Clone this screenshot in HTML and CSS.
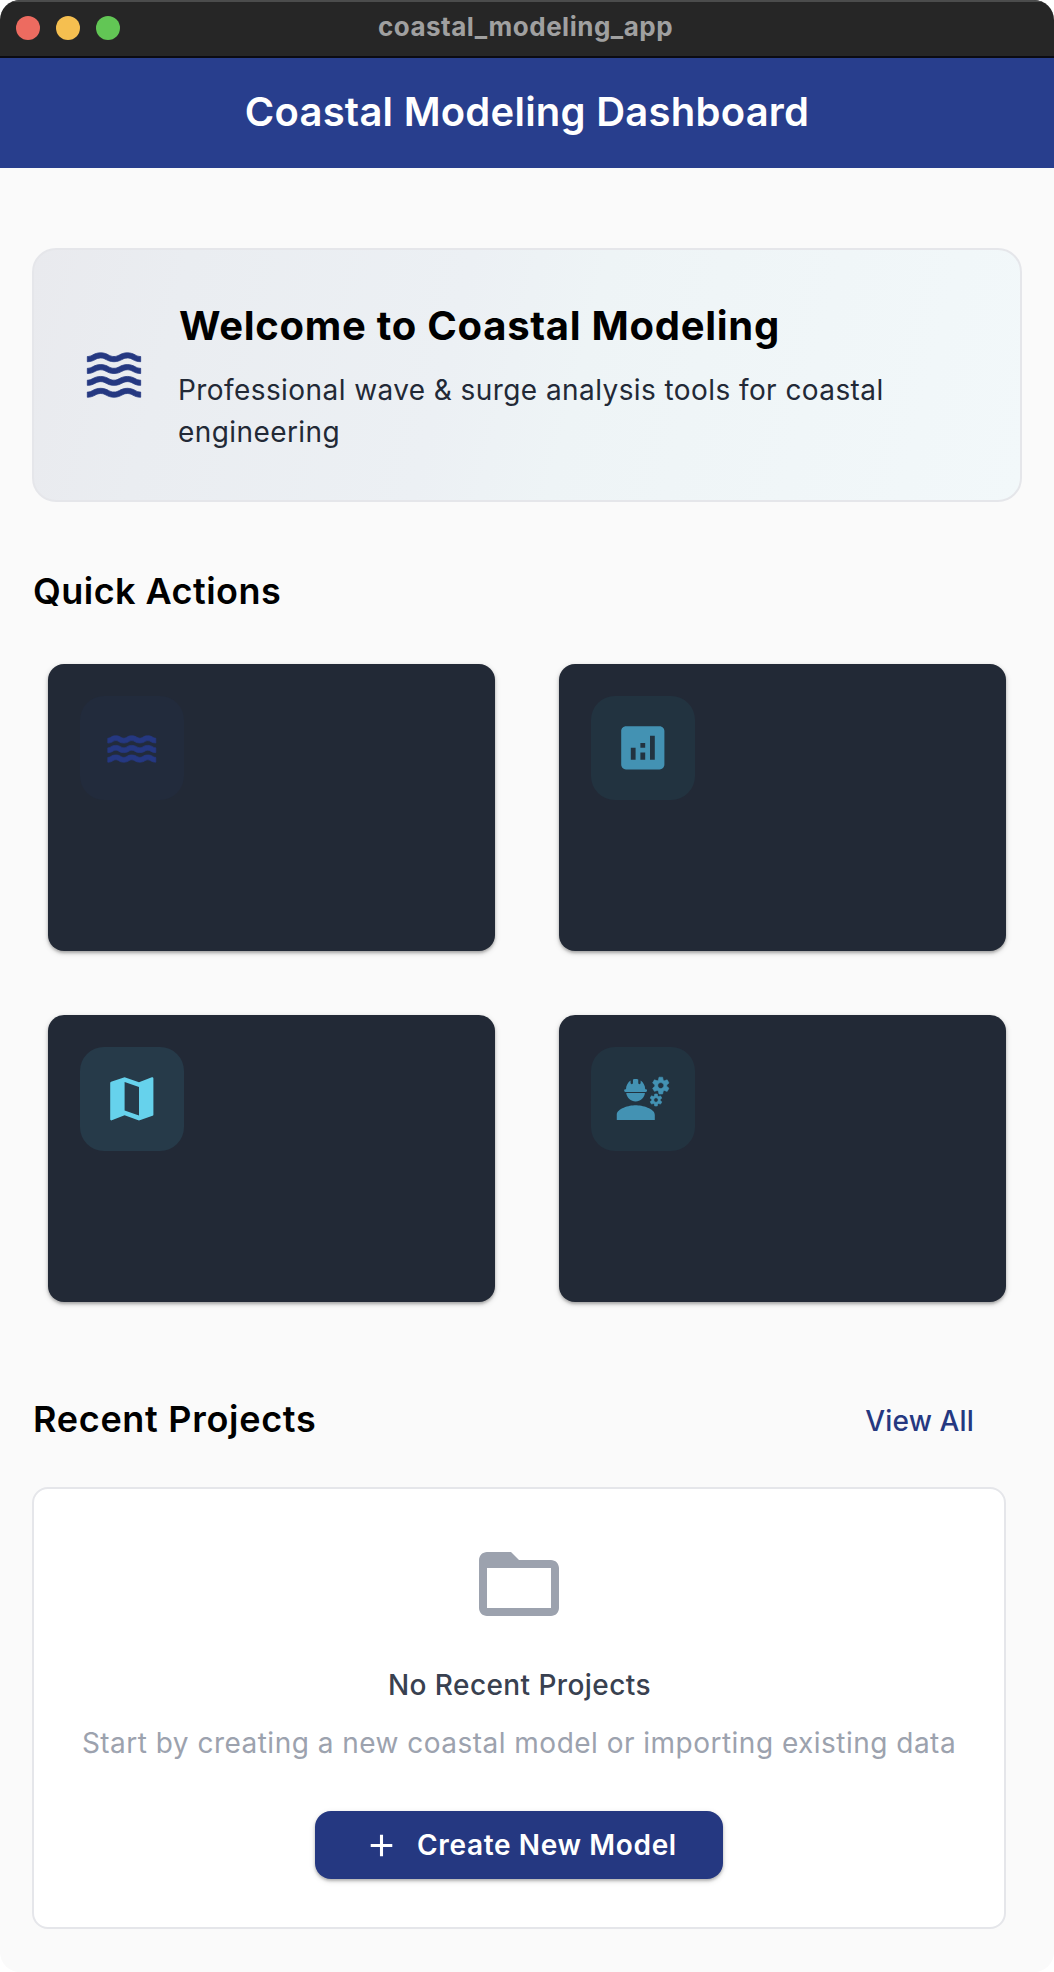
FILE: index.html
```
<!DOCTYPE html>
<html lang="en">
<head>
<meta charset="utf-8">
<title>coastal_modeling_app</title>
<link rel="stylesheet" href="styles.css">
</head>
<body>
<div class="window">
  <div class="titlebar">
    <div class="lights">
      <span class="light light-close"></span>
      <span class="light light-min"></span>
      <span class="light light-max"></span>
    </div>
    <span class="window-title">coastal_modeling_app</span>
  </div>
  <header class="appbar"><h1>Coastal Modeling Dashboard</h1></header>
  <main class="content">
    <section class="welcome">
      <svg class="welcome-icon" viewBox="0 0 24 24"><path id="wave" d="M17 16.99c-1.35 0-2.2.42-2.95.8-.65.33-1.18.6-2.05.6-.9 0-1.4-.25-2.05-.6-.75-.38-1.57-.8-2.95-.8s-2.2.42-2.95.8c-.65.33-1.17.6-2.05.6v1.95c1.35 0 2.2-.42 2.95-.8.65-.33 1.17-.6 2.05-.6s1.4.25 2.05.6c.75.38 1.57.8 2.95.8s2.2-.42 2.95-.8c.65-.33 1.18-.6 2.05-.6.9 0 1.4.25 2.05.6.75.38 1.58.8 2.95.8v-1.95c-.9 0-1.4-.25-2.05-.6-.75-.38-1.6-.8-2.95-.8z"/><use href="#wave" y="-4.45"/><use href="#wave" y="-8.9"/><use href="#wave" y="-13.32"/></svg>
      <div class="welcome-text">
        <h2>Welcome to Coastal Modeling</h2>
        <p>Professional wave &amp; surge analysis tools for coastal engineering</p>
      </div>
    </section>

    <h3 class="section-title quick-title">Quick Actions</h3>
    <section class="actions">
      <div class="action action-navy">
        <div class="tile"><svg viewBox="0 0 24 24"><path id="ripple" d="M18.67 15c-1.95 0-2.09 1-3.33 1-1.19 0-1.42-1-3.33-1-1.95 0-2.1 1-3.34 1-1.24 0-1.38-1-3.33-1C3.39 15 3.24 16 2 16v2c1.95 0 2.11-1 3.34-1 1.24 0 1.38 1 3.33 1 1.95 0 2.1-1 3.34-1 1.19 0 1.42 1 3.33 1 1.94 0 2.09-1 3.33-1 1.19 0 1.42 1 3.33 1v-2c-1.24 0-1.38-1-3.33-1z"/><use href="#ripple" y="-4"/><use href="#ripple" y="-8"/></svg></div>
      </div>
      <div class="action action-teal">
        <div class="tile"><svg viewBox="0 0 24 24"><path d="M19 3H5c-1.1 0-2 .9-2 2v14c0 1.1.9 2 2 2h14c1.1 0 2-.9 2-2V5c0-1.1-.9-2-2-2zM9 17H7v-5h2v5zm4 0h-2v-3h2v3zm0-5h-2v-2h2v2zm4 5h-2V7h2v10z"/></svg></div>
      </div>
      <div class="action action-cyan">
        <div class="tile"><svg viewBox="0 0 24 24"><path d="M20.5 3l-.16.03L15 5.1 9 3 3.36 4.9c-.21.07-.36.25-.36.48V20.5c0 .28.22.5.5.5l.16-.03L9 18.9l6 2.1 5.64-1.9c.21-.07.36-.25.36-.48V3.5c0-.28-.22-.5-.5-.5zM15 19l-6-2.11V5l6 2.11V19z"/></svg></div>
      </div>
      <div class="action action-teal">
        <div class="tile"><svg viewBox="0 0 24 24"><path d="M9 14.7c-2.67 0-7.85 1.34-7.85 4v2.1H17v-2.1c0-2.66-5.33-4-8-4z"/><path d="M4.74 9.15h8.52c.27 0 .49-.22.49-.49v-.17c0-.27-.22-.49-.49-.49H13c0-1.48-.81-2.85-1.9-3.6v.9c0 .28-.22.6-.5.6s-.5-.22-.5-.5V3.95C9.68 3.86 9.35 3.8 9 3.8s-.68.06-1.1.15V5.4c0 .28-.22.5-.5.5s-.5-.32-.5-.6v-.9C5.81 5.15 5 6.52 5 8h-.26c-.27 0-.49.22-.49.49v.17c0 .26.22.49.49.49z"/><path d="M5.1 9.6C5.3 11.6 7 13.1 9 13.1s3.7-1.5 3.9-3.5z"/><path class="gear" d="M21.98 6.23l.93-.83-.75-1.3-1.19.39c-.14-.11-.3-.2-.47-.27L20.25 3h-1.5l-.25 1.22c-.17.07-.33.16-.48.27l-1.18-.39-.75 1.3.93.83c-.02.17-.02.35 0 .52l-.93.85.75 1.3 1.2-.38c.13.1.28.18.43.25l.28 1.23h1.5l.27-1.22c.16-.07.3-.15.44-.25l1.19.38.75-1.3-.93-.85c.03-.19.02-.36.01-.53zM19.5 7.75c-.69 0-1.25-.56-1.25-1.25s.56-1.25 1.25-1.25 1.25.56 1.25 1.25-.56 1.25-1.25 1.25z"/><path class="gear" d="M19.4 10.79l-.85.28c-.1-.08-.21-.14-.33-.19l-.18-.88h-1.07l-.18.87c-.12.05-.24.12-.34.19l-.84-.28-.54.93.66.59c-.01.13-.01.25 0 .37l-.66.61.54.93.86-.27c.1.07.2.13.31.18l.18.88h1.07l.19-.87c.11-.05.22-.11.32-.18l.85.27.54-.93-.66-.61c.01-.13.01-.25 0-.37l.66-.59-.53-.93zm-1.9 2.6c-.49 0-.89-.4-.89-.89s.4-.89.89-.89.89.4.89.89-.4.89-.89.89z"/></svg></div>
      </div>
    </section>

    <div class="recent-head">
      <h3 class="section-title">Recent Projects</h3>
      <a class="view-all">View All</a>
    </div>
    <section class="empty">
      <svg class="folder" viewBox="0 0 24 24"><path d="M20 6h-8l-2-2H4c-1.1 0-1.99.9-1.99 2L2 18c0 1.1.9 2 2 2h16c1.1 0 2-.9 2-2V8c0-1.1-.9-2-2-2zm0 12H4V8h16v10z"/></svg>
      <p class="empty-title">No Recent Projects</p>
      <p class="empty-text">Start by creating a new coastal model or importing existing data</p>
      <button class="create"><svg viewBox="0 0 24 24"><path d="M19 13h-6v6h-2v-6H5v-2h6V5h2v6h6v2z"/></svg><span>Create New Model</span></button>
    </section>
  </main>
</div>
</body>
</html>
```
FILE: styles.css
```
* { box-sizing: border-box; margin: 0; padding: 0; }
body { background: #fff; font-family: Inter, "Liberation Sans", sans-serif; }
svg { display: block; fill: currentColor; flex: none; }

.window { width: 1054px; height: 1972px; border-radius: 20px; overflow: hidden; background: #fafafa; }

.titlebar {
  display: grid; grid-template-columns: 200px 1fr 200px; align-items: center;
  height: 58px; background: #262626;
  border-top: 2px solid #4b4c4c; border-bottom: 2px solid #0b0b12;
}
.lights { display: flex; gap: 16px; padding: 0 0 2px 16px; }
.light { width: 24px; height: 24px; border-radius: 50%; }
.light-close { background: #ed6b60; }
.light-min { background: #f5bf50; }
.light-max { background: #62c655; }
.window-title {
  text-align: center; color: #a0a0a0; font-weight: 700; font-size: 26px;
  letter-spacing: .5px; line-height: 30px; padding: 0 3px 5px 0;
}

.appbar { height: 110px; background: #283e8d; color: #fff; text-align: center; }
.appbar h1 { font-size: 40px; font-weight: 600; letter-spacing: .24px; line-height: 107px; }

.content { padding: 80px 32px 0; }

.welcome {
  display: flex; align-items: center; gap: 32px; height: 254px; padding: 0 48px;
  border: 2px solid #e5e6ea; border-radius: 24px;
  background: linear-gradient(104deg, #e9eaee, #eaedf1 15%, #ecf0f4 42%, #eef4f6 55%, #f2f8fa);
}
.welcome-icon { width: 64px; height: 64px; color: #253881; stroke: currentColor; stroke-width: .3; }
.welcome h2 { padding-left: 1px; font-size: 40px; font-weight: 700; letter-spacing: .72px; line-height: 58px; color: #000; }
.welcome p { margin-top: 14px; width: 760px; font-size: 28px; letter-spacing: .42px; line-height: 42px; color: #222936; }

.section-title { padding-left: 1px; font-size: 36px; font-weight: 600; letter-spacing: .45px; line-height: 50px; color: #000; }
.quick-title { margin-top: 64px; }

.actions { display: grid; grid-template-columns: 447px 447px; gap: 64px; margin: 48px 16px 0; }
.action {
  height: 287px; padding: 32px; border-radius: 16px; background: #222936;
  box-shadow: 0 2px 3px rgba(0,0,0,.26), 0 2px 6px rgba(0,0,0,.14);
}
.tile { display: grid; place-items: center; width: 104px; height: 104px; border-radius: 24px; }
.tile svg { width: 57.6px; height: 57.6px; }
.tile .gear { stroke: currentColor; stroke-width: .25; }
.action-navy .tile { background: #222b3c; color: #253881; }
.action-navy svg { stroke: currentColor; stroke-width: .3; }
.action-teal .tile { background: #223340; color: #4392b3; }
.action-cyan .tile { background: #263a49; color: #66d2ec; }

.recent-head { display: flex; justify-content: space-between; margin-top: 92px; padding-right: 48px; }
.recent-head .section-title { letter-spacing: .7px; }
.view-all { font-size: 28px; font-weight: 500; letter-spacing: .14px; line-height: 55px; color: #253881; }

.empty {
  display: flex; flex-direction: column; align-items: center;
  width: 974px; height: 442px; margin-top: 38px; padding-top: 47px;
  border: 2px solid #e5e6ea; border-radius: 16px; background: #fff;
}
.folder { width: 96px; height: 96px; color: #9ca2ae; }
.empty-title { margin-top: 33px; padding-left: 1px; font-size: 28px; font-weight: 500; letter-spacing: .42px; line-height: 40px; color: #394150; }
.empty-text { margin-top: 17px; font-size: 28px; letter-spacing: .48px; line-height: 42px; color: #9ca2ae; white-space: nowrap; }
.create {
  display: flex; align-items: center; gap: 17px; width: 408px; height: 68px; margin-top: 47px; padding: 0 0 0 48px;
  border: 0; border-radius: 16px; background: #253881; color: #fff;
  font: 600 28px/40px Inter, "Liberation Sans", sans-serif; letter-spacing: .65px; white-space: nowrap;
  box-shadow: 0 2px 3px rgba(0,0,0,.24), 0 2px 6px rgba(0,0,0,.12);
}
.create svg { width: 37px; height: 37px; }
```
